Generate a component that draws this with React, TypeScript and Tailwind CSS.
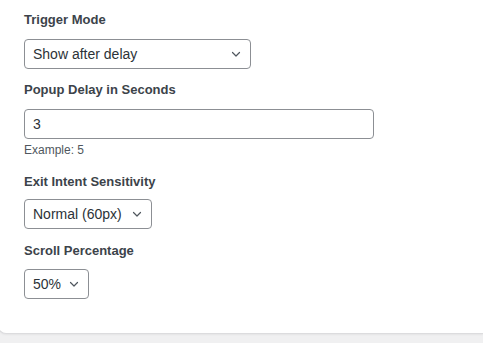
import React from "react";

function Chevron() {
  return (
    <svg width="12" height="12" viewBox="0 0 12 12" fill="none" className="shrink-0">
      <path d="M2.5 4.5 L6 8 L9.5 4.5" stroke="#50575e" strokeWidth="1.2" strokeLinecap="round" strokeLinejoin="round" />
    </svg>
  );
}

function Select({ value, width }: { value: string; width: string }) {
  return (
    <div className={`flex h-[30px] items-center justify-between rounded-[4px] border border-[#8c8f94] bg-white pl-[8px] pr-[8px] text-[14px] text-[#2c3338] ${width}`}>
      <span>{value}</span>
      <Chevron />
    </div>
  );
}

export default function App() {
  return (
    <div className="h-[343px] w-[483px] overflow-hidden bg-[#f0f0f1]" style={{ fontFamily: "'Liberation Sans', Arial, sans-serif" }}>
      <div className="ml-[-2px] h-[334px] rounded-bl-[8px] border-b border-l border-[#dcdcde] bg-white pl-[25px] pt-[11px] shadow-[0_1px_2px_rgba(0,0,0,0.05)]">
        <div className="text-[13px] font-semibold leading-[18px] text-[#3c434a]">Trigger Mode</div>
        <div className="mt-[10px]">
          <Select value="Show after delay" width="w-[227px]" />
        </div>
        <div className="mt-[12px] text-[13px] font-semibold leading-[18px] text-[#3c434a]">Popup Delay in Seconds</div>
        <div className="mt-[10px] flex h-[30px] w-[350px] items-center rounded-[4px] border border-[#8c8f94] bg-white pl-[8px] text-[14px] text-[#2c3338]">3</div>
        <div className="mt-[2px] text-[12px] leading-[18px] text-[#50575e]">Example: 5</div>
        <div className="mt-[14px] text-[13px] font-semibold leading-[18px] text-[#3c434a]">Exit Intent Sensitivity</div>
        <div className="mt-[8px]">
          <Select value="Normal (60px)" width="w-[128px]" />
        </div>
        <div className="mt-[13px] text-[13px] font-semibold leading-[18px] text-[#3c434a]">Scroll Percentage</div>
        <div className="mt-[9px]">
          <Select value="50%" width="w-[65px]" />
        </div>
      </div>
    </div>
  );
}
